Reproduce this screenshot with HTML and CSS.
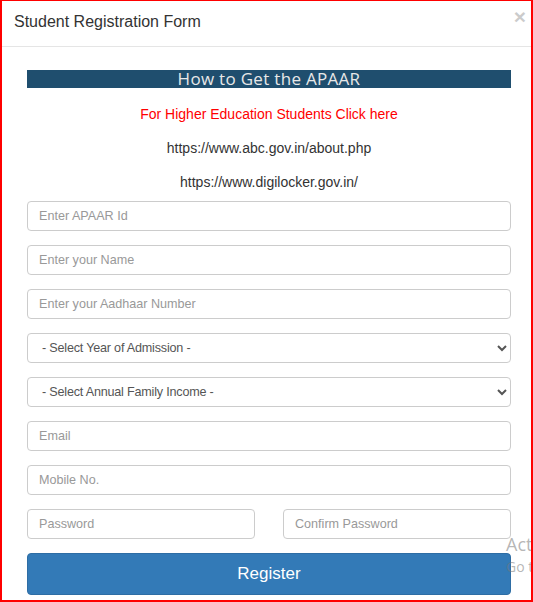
FILE: index.html
```html
<!DOCTYPE html>
<html lang="en">
<head>
    <meta charset="UTF-8">
    <meta name="viewport" content="width=device-width, initial-scale=1.0">
    <title>Student Registration Form</title>
    <link rel="stylesheet" href="styles.css">
</head>
<body>
    <div class="modal">
        <div class="modal-header">
            <h4 class="modal-title">Student Registration Form</h4>
            <button type="button" class="close">&times;</button>
        </div>

        <div class="modal-body">
            <h3 class="apaar-title">How to Get the APAAR</h3>
            <p class="info-link red"><a href="#">For Higher Education Students Click here</a></p>
            <p class="info-link">https://www.abc.gov.in/about.php</p>
            <p class="info-link">https://www.digilocker.gov.in/</p>

            <form class="reg-form">
                <input type="text" class="form-control" placeholder="Enter APAAR Id">
                <input type="text" class="form-control" placeholder="Enter your Name">
                <input type="text" class="form-control" placeholder="Enter your Aadhaar Number">
                <select class="form-control">
                    <option>- Select Year of Admission -</option>
                </select>
                <select class="form-control">
                    <option>- Select Annual Family Income -</option>
                </select>
                <input type="email" class="form-control" placeholder="Email">
                <input type="text" class="form-control" placeholder="Mobile No.">
                <div class="form-row">
                    <input type="password" class="form-control" placeholder="Password">
                    <input type="password" class="form-control" placeholder="Confirm Password">
                </div>
                <button type="submit" class="btn-register">Register</button>
            </form>
        </div>

        <!-- filigrane windows (coupe par le bord) -->
        <div class="watermark">
            <span class="wm-big">Act</span>
            <span class="wm-small">Go t</span>
        </div>
    </div>
</body>
</html>
```

FILE: styles.css
```css
* {
    box-sizing: border-box;
}

body {
    margin: 0;
    padding: 0;
    font-family: 'Liberation Sans', Arial, sans-serif;
    color: #333;
    background: #fff;
}

/* Fenetre modale */
.modal {
    position: relative;
    width: 533px;
    height: 602px;
    border: 2px solid #ff0000;
    border-top-width: 1px;
    overflow: hidden;
    background: #fff;
}

.modal-header {
    display: flex;
    justify-content: space-between;
    align-items: flex-start;
    height: 46px;
    padding: 8px 5px 0 12px;
    border-bottom: 1px solid #e5e5e5;
}

.modal-title {
    margin: 0;
    font-size: 16px;
    font-weight: normal;
    line-height: 26px;
    color: #333;
}

.close {
    padding: 0;
    margin-top: -1px;
    border: none;
    background: none;
    font-family: 'Liberation Sans', Arial, sans-serif;
    font-size: 21px;
    font-weight: bold;
    line-height: 18px;
    color: #000;
    opacity: 0.2;
    cursor: pointer;
}

.modal-body {
    padding: 23px 20px 0 25px;
}

.apaar-title {
    margin: 0;
    height: 18px;
    background-color: #1f4e6e;
    color: #e8e8e8;
    font-family: 'Open Sans', sans-serif;
    font-size: 17px;
    font-weight: normal;
    line-height: 18px;
    letter-spacing: 0.3px;
    text-align: center;
}

.info-link {
    margin: 14px 0 0;
    font-size: 14px;
    line-height: 20px;
    text-align: center;
    color: #333;
}

.info-link.red {
    margin-top: 16px;
}

.info-link a {
    color: #ff0000;
    text-decoration: none;
}

.reg-form {
    display: flex;
    flex-direction: column;
    gap: 14px;
    margin-top: 9px;
}

.form-control {
    display: block;
    width: 100%;
    height: 30px;
    padding: 0 11px 1px;
    font-family: 'Liberation Sans', Arial, sans-serif;
    font-size: 12.6px;
    color: #555;
    background-color: #fff;
    border: 1px solid #ccc;
    border-radius: 4px;
}

.form-control::placeholder {
    color: #999;
}

select.form-control {
    padding-left: 10px;
    letter-spacing: -0.2px;
}

.form-row {
    display: flex;
    gap: 28px;
}

.form-row .form-control {
    flex: 1;
}

.btn-register {
    height: 42px;
    padding-bottom: 2px;
    border: 1px solid #2e6da4;
    border-radius: 4px;
    background-color: #337ab7;
    color: #fff;
    font-family: 'Liberation Sans', Arial, sans-serif;
    font-size: 17px;
    cursor: pointer;
}

.watermark {
    position: absolute;
    left: 504px;
    top: 531px;
    white-space: nowrap;
    color: rgba(120, 120, 120, 0.55);
    font-family: 'Open Sans', sans-serif;
}

.wm-big {
    display: block;
    font-size: 18px;
    line-height: 25px;
}

.wm-small {
    display: block;
    font-size: 14px;
    line-height: 20px;
}
```
